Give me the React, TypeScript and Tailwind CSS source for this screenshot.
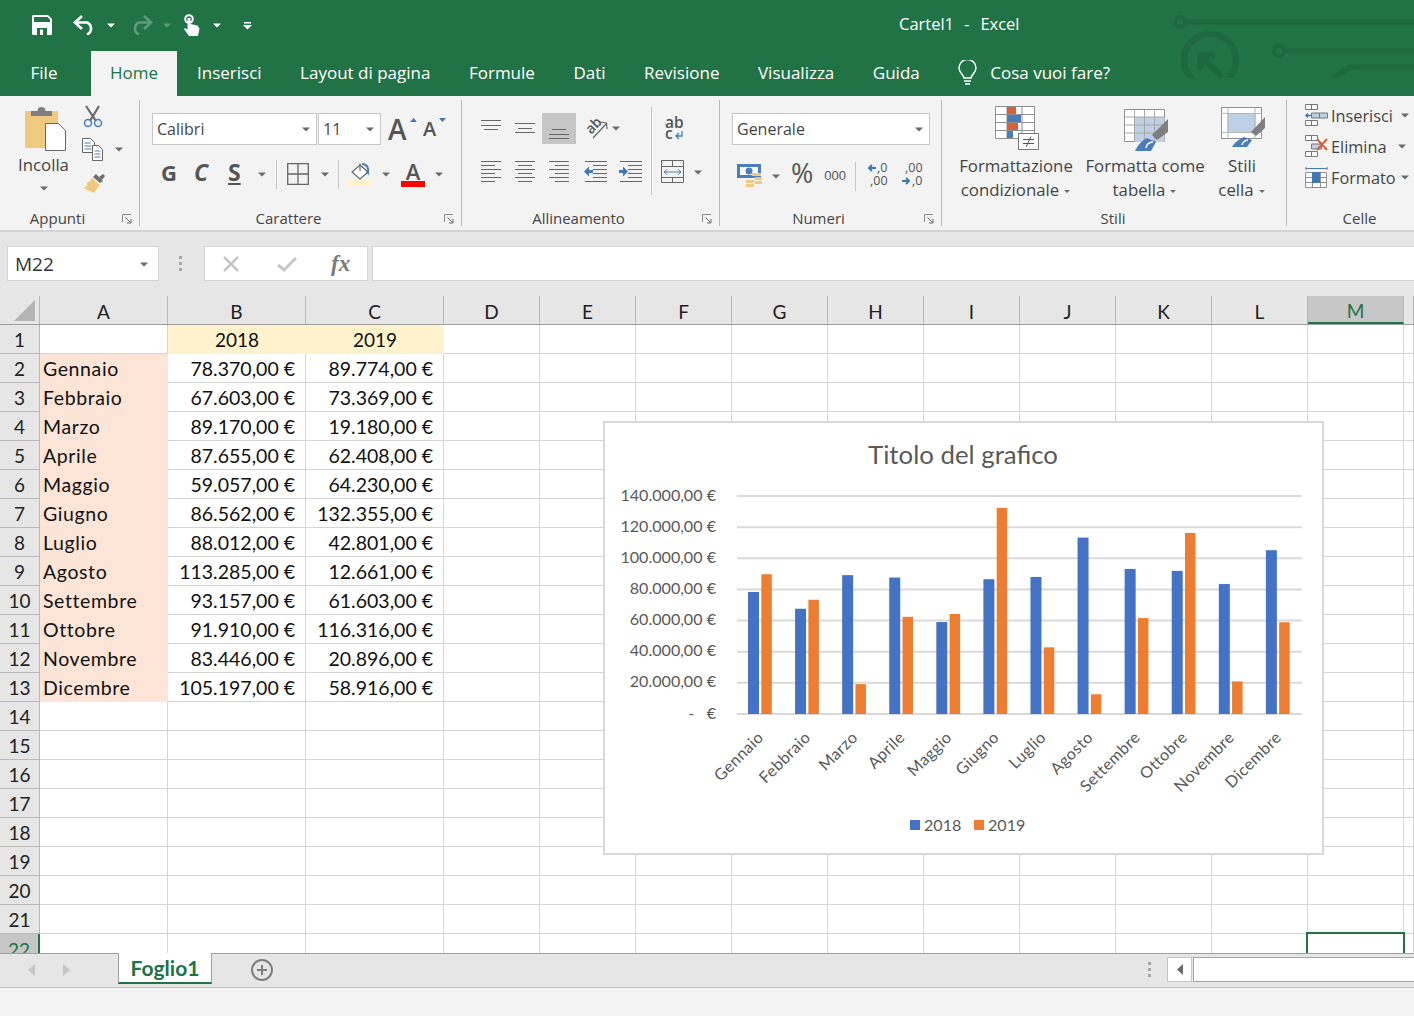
import type { ReactNode } from 'react';

const months = ['Gennaio', 'Febbraio', 'Marzo', 'Aprile', 'Maggio', 'Giugno', 'Luglio', 'Agosto', 'Settembre', 'Ottobre', 'Novembre', 'Dicembre'];
const v2018 = [78370, 67603, 89170, 87655, 59057, 86562, 88012, 113285, 93157, 91910, 83446, 105197];
const v2019 = [89774, 73369, 19180, 62408, 64230, 132355, 42801, 12661, 61603, 116316, 20896, 58916];
const cols = ['A', 'B', 'C', 'D', 'E', 'F', 'G', 'H', 'I', 'J', 'K', 'L', 'M', ''];
const widths = ['w-[128px]', 'w-[138px]', 'w-[138px]', 'w-[96px]', 'w-[96px]', 'w-[96px]', 'w-[96px]', 'w-[96px]', 'w-[96px]', 'w-[96px]', 'w-[96px]', 'w-[96px]', 'w-[96px]', 'w-[10px]'];
const rows = Array.from({ length: 22 }, (_, i) => i + 1);

const fmt = (n: number) => n.toLocaleString('de-DE', { minimumFractionDigits: 2 }) + ' €';

function Caret({ className = '', color = '#6a6a6a' }: { className?: string; color?: string }) {
  return (
    <svg width="8" height="5" viewBox="0 0 8 5" className={className}>
      <path d="M0 .5h8L4 4.5z" fill={color} />
    </svg>
  );
}

function Launcher() {
  return (
    <svg width="10" height="10" viewBox="0 0 10 10" className="absolute right-[7px] bottom-[2px]">
      <path d="M.5 8V.5H9" fill="none" stroke="#8a8a8a" />
      <path d="M3.5 3.5 8.5 8.5M9 5v4H5" fill="none" stroke="#6a6a6a" />
    </svg>
  );
}

function Group({ label, width, launcher = true, children }: { label: string; width: string; launcher?: boolean; children: ReactNode }) {
  return (
    <div className={`${width} relative h-[126px] shrink-0 border-r border-[#b9b9b9]`}>
      {children}
      <div className={`absolute bottom-0 left-0 right-0 h-[16px] text-center text-[15px] leading-[16px] text-[#444] ${launcher ? 'pr-[24px]' : 'pr-[2px]'}`}>{label}</div>
      {launcher && <Launcher />}
    </div>
  );
}

function Lines({ w = 20, h = 24, lines }: { w?: number; h?: number; lines: [number, number, number][] }) {
  return (
    <svg width={w} height={h} viewBox={`0 0 ${w} ${h}`} className="block">
      {lines.map(([x, y, l], i) => (
        <path key={i} d={`M${x} ${y + 0.5}h${l}`} stroke="#666" strokeWidth="1" />
      ))}
    </svg>
  );
}

const ys = [1, 5, 9, 13, 17, 21];

function PasteIcon() {
  return (
    <svg width="44" height="47" viewBox="0 0 44 47">
      <rect x="1" y="6" width="33" height="37" rx="1" fill="#f0c981" />
      <path d="M7 6h6.500a4 4 0 0 1 8 0H28v5H7z" fill="#7f7f7f" />
      <path d="M21.500 18.500h13l7 7v20h-20z" fill="#fff" stroke="#666" />
    </svg>
  );
}

function ScissorsIcon() {
  return (
    <svg width="22" height="23" viewBox="0 0 22 23">
      <path d="M4 1 14 16M17 1 8 16" stroke="#6a6a6a" strokeWidth="2.200" fill="none" />
      <circle cx="6" cy="18" r="3.500" fill="none" stroke="#4a7ebb" strokeWidth="1.500" />
      <circle cx="16" cy="18" r="3.500" fill="none" stroke="#4a7ebb" strokeWidth="1.500" />
    </svg>
  );
}

function CopyIcon() {
  return (
    <svg width="22" height="23" viewBox="0 0 22 23">
      <path d="M.5.500h8l4 4v10H.5z" fill="#fff" stroke="#666" />
      <path d="M2.500 5h6M2.500 8h7M2.500 11h7" stroke="#4a7ebb" />
      <path d="M10.500 7.500h6l4 4v11h-10z" fill="#fff" stroke="#666" />
      <path d="M12.500 13h6M12.500 16h6M12.500 19h6" stroke="#4a7ebb" />
    </svg>
  );
}

function BrushIcon() {
  return (
    <svg width="24" height="21" viewBox="0 0 24 21">
      <path d="M10 5 18 12 12 20 1 15 3 14 6 12 4 11 8 8z" fill="#f0c981" />
      <path d="M11 4 14 1 21 8 18 10z" fill="#6f6f6f" />
      <path d="M17 4l4-3 2 2-3 4z" fill="#6f6f6f" />
    </svg>
  );
}

function BordersIcon() {
  return (
    <svg width="22" height="22" viewBox="0 0 22 22">
      <path d="M.7.700h20.600v20.600H.7zM11 1v20M1 11h20" fill="none" stroke="#666" strokeWidth="1.300" />
    </svg>
  );
}

function FillIcon() {
  return (
    <svg width="26" height="26" viewBox="0 0 26 26">
      <path d="M13 4 21 11 13 18 5 11z" fill="#fff" stroke="#666" strokeWidth="1.200" />
      <path d="M13 10V2.500" stroke="#666" strokeWidth="1.200" />
      <path d="M15 3c5 0 7 4 6 9l-1.500-2" fill="none" stroke="#4a7ebb" strokeWidth="2" />
      <rect x="1" y="19" width="24" height="6" fill="#fff2cc" />
    </svg>
  );
}

function OrientIcon() {
  return (
    <svg width="26" height="26" viewBox="0 0 26 26" className="overflow-visible">
      <text x="2" y="15" transform="rotate(-45 9 11)" fontSize="14" fill="#555" fontFamily="'Open Sans', sans-serif" fontWeight="600">ab</text>
      <path d="M9 22 22 8M16 6l6.500 1 .5 6" fill="none" stroke="#666" strokeWidth="1.200" />
    </svg>
  );
}

function WrapIcon() {
  return (
    <svg width="24" height="30" viewBox="0 0 24 30" className="overflow-visible">
      <text x="0" y="15" fontSize="15.500" fill="#555" fontFamily="'Open Sans', sans-serif" fontWeight="600">ab</text>
      <text x="0" y="26" fontSize="15.500" fill="#555" fontFamily="'Open Sans', sans-serif" fontWeight="600">c</text>
      <path d="M17 18v5h-6M14 20l-3 3 3 3" fill="none" stroke="#4a7ebb" strokeWidth="1.300" />
    </svg>
  );
}

function MergeIcon() {
  return (
    <svg width="24" height="24" viewBox="0 0 24 24">
      <path d="M.5.500h22v22H.5zM1 6.500h21M1 17.500h21M11.500 1v5M11.500 18v5" fill="none" stroke="#666" />
      <path d="M3 12h17M6 9.500 3 12l3 2.500M17 9.500l3 2.500-3 2.500" fill="none" stroke="#4a7ebb" />
    </svg>
  );
}

function IndentIcon({ right = false }: { right?: boolean }) {
  return (
    <svg width="23" height="22" viewBox="0 0 23 22">
      <path d="M1 .5h22M9 4.500h14M9 8.500h14M9 12.500h14M9 16.500h14M1 20.500h22" stroke="#666" />
      {right ? <path d="M0 9h4V5.500l5 5-5 5V12H0z" fill="#3f78b5" /> : <path d="M9 9H5V5.500l-5 5 5 5V12h4z" fill="#3f78b5" />}
    </svg>
  );
}

function CurrencyIcon() {
  return (
    <svg width="25" height="24" viewBox="0 0 25 24">
      <path d="M0 0h24v14H0z" fill="#4a7ebb" />
      <path d="M3 3h18v8H3z" fill="#fff" />
      <circle cx="12" cy="7" r="3.500" fill="#4a7ebb" />
      <path d="M15 9h9v3h-9zM18 13h7v3h-7z" fill="#f0c981" />
      <path d="M9 16h8v3H9zM9 20h8v3H9zM18 17h7v3h-7z" fill="#f0c981" />
    </svg>
  );
}

function DecimalIcon({ more }: { more: boolean }) {
  const font = "'Open Sans', sans-serif";
  return (
    <svg width="24" height="26" viewBox="0 0 24 26" className="overflow-visible">
      {more ? (
        <>
          <path d="M9 5H2M5 2 2 5l3 3" fill="none" stroke="#3f78b5" strokeWidth="2" />
          <text x="10" y="9" fontSize="12.500" fill="#555" fontFamily={font}>,0</text>
          <text x="3" y="22" fontSize="12.500" fill="#555" fontFamily={font}>,00</text>
        </>
      ) : (
        <>
          <text x="4" y="9" fontSize="12.500" fill="#555" fontFamily={font}>,00</text>
          <path d="M1 18h7M5 15l3 3-3 3" fill="none" stroke="#3f78b5" strokeWidth="2" />
          <text x="11" y="22" fontSize="12.500" fill="#555" fontFamily={font}>,0</text>
        </>
      )}
    </svg>
  );
}

function CondFormatIcon() {
  return (
    <svg width="46" height="46" viewBox="0 0 46 46">
      <path d="M.5 1.500h39v32H.5zM.5 9.500h39M.5 17.500h39M.5 25.500h39M12 2v32M27 2v32" fill="#fff" stroke="#8f8f8f" />
      <path d="M12 2h9v7h-9z" fill="#d9603b" />
      <path d="M12 10h14v7H12z" fill="#4a7ebb" />
      <path d="M12 18h11v7H12z" fill="#d9603b" />
      <path d="M12 26h6v7h-6z" fill="#4a7ebb" />
      <path d="M23.500 28.500h20v16h-20z" fill="#fff" stroke="#777" />
      <path d="M28 34.500h11M28 38.500h11M36 31.500 31 42" stroke="#555" />
    </svg>
  );
}

function FormatTableIcon() {
  return (
    <svg width="46" height="46" viewBox="0 0 46 46">
      <path d="M.5 4.500h40v32H.5z" fill="#fff" stroke="#8f8f8f" />
      <path d="M10.500 12h30v25h-30z" fill="#bdd0e6" />
      <path d="M.5 12h40M.5 20h40M.5 28h40M10.500 5v32M20.500 5v32M30.500 5v32" fill="none" stroke="#a9a9a9" />
      <path d="M44 14V27L33 35 28 30z" fill="#7f7f7f" />
      <path d="M11 46C14 40 18 35 23 33L32 37 27 46z" fill="#4a7ebb" />
      <path d="M22 43c0-3 3-6 7-6" fill="none" stroke="#fff" strokeWidth="1.500" />
    </svg>
  );
}

function CellStyleIcon() {
  return (
    <svg width="46" height="46" viewBox="0 0 46 46">
      <path d="M.5 2.500h40v31H.5z" fill="#fff" stroke="#8f8f8f" />
      <path d="M7 8.500h27v19H7z" fill="#bdd0e6" stroke="#b5c2d0" />
      <path d="M7 2.500v31M34 2.500v31M.5 8.500h40M.5 27.500h40" fill="none" stroke="#b5b5b5" />
      <path d="M44 12V23L35 31 30 27z" fill="#7f7f7f" />
      <path d="M11 42C14 37 18 34 23 32L31 35 26 42z" fill="#4a7ebb" />
      <path d="M21 40c0-2 3-5 6-5" fill="none" stroke="#fff" strokeWidth="1.500" />
    </svg>
  );
}

function InsertIcon() {
  return (
    <svg width="23" height="23" viewBox="0 0 23 23">
      <path d="M.5.500h12v5H.5zM6.500 1v4M.5 16.500h12v5H.5zM6.500 16v6" fill="#fff" stroke="#777" />
      <path d="M6.500 9h16v5h-16zM14.500 9v5" fill="#bdd0e6" stroke="#777" />
      <path d="M6 11.500H1M3 9.500l-2 2 2 2" fill="none" stroke="#3f78b5" strokeWidth="1.500" />
    </svg>
  );
}

function DeleteIcon() {
  return (
    <svg width="24" height="23" viewBox="0 0 24 23">
      <path d="M.5.500h12v5H.5zM.5 16.500h12v5H.5zM6.500 16v6M6.500 1v4" fill="#fff" stroke="#777" />
      <path d="M6.500 9h10v5h-10z" fill="#bdd0e6" stroke="#777" />
      <path d="M12 4l10 11M22 4 12 15" stroke="#d9603b" strokeWidth="2" />
    </svg>
  );
}

function FormatIcon() {
  return (
    <svg width="23" height="23" viewBox="0 0 23 23">
      <path d="M1 2.500h7M15 2.500h7M1 1v3M22 1v3" stroke="#777" />
      <path d="M3 2.500h17" stroke="#3f78b5" />
      <path d="M.5 6.500h21v15h-21zM7.500 7v14M15.500 7v14M1 11.500h20M1 16.500h20" fill="#fff" stroke="#8f8f8f" />
      <path d="M7 6h8v11H7z" fill="#3f78b5" />
    </svg>
  );
}

function CircuitBg() {
  return (
    <svg width="240" height="78" viewBox="0 0 240 78" className="absolute right-0 top-0">
      <g fill="none" stroke="#1e673f" strokeWidth="5">
        <circle cx="6" cy="22" r="5" strokeWidth="4" />
        <path d="M12 22h228" />
        <circle cx="105" cy="51" r="5" strokeWidth="4" />
        <path d="M111 51h129" />
        <path d="M159 78l14-9q3-2 8-2h59" />
        <circle cx="36" cy="60" r="26" strokeWidth="6" />
        <path d="M27 56 48 77" strokeWidth="6" />
        <path d="M26.500 70V55.500H41" strokeWidth="6" />
      </g>
    </svg>
  );
}

function TitleBar() {
  return (
    <div className="relative flex h-[51px] items-start bg-[#217346] text-white">
      <CircuitBg />
      <div className="flex items-center pl-[32px] pt-[14px]">
        <svg width="20" height="20" viewBox="0 0 20 20">
          <path d="M0 1.500A1.500 1.500 0 0 1 1.500 0H16l4 4v14.500a1.500 1.500 0 0 1-1.500 1.500h-17A1.500 1.500 0 0 1 0 18.500z" fill="#fff" />
          <path d="M2 2h13.500L18 4.500V7H2z" fill="#217346" />
          <path d="M5 13h10v7H5z" fill="#217346" />
          <path d="M8 14.500h3V20H8z" fill="#fff" />
        </svg>
        <svg width="23" height="20" viewBox="0 0 23 20" className="ml-[21px]">
          <path d="M9 1 2 7.500 9 14M3 7.500h11a6.500 6.500 0 0 1 0 12" fill="none" stroke="#fff" strokeWidth="2.600" />
        </svg>
        <Caret color="#fff" className="ml-[11px]" />
        <svg width="23" height="20" viewBox="0 0 23 20" className="ml-[15px]">
          <path d="M14 1l7 6.500L14 14M20 7.500H9a6.500 6.500 0 0 0 0 12" fill="none" stroke="#5f9c7b" strokeWidth="2.600" />
        </svg>
        <Caret color="#5f9c7b" className="ml-[10px]" />
        <svg width="17" height="22" viewBox="0 0 17 22" className="ml-[12px]">
          <circle cx="6" cy="5" r="3.800" fill="none" stroke="#fff" strokeWidth="2" />
          <path d="M4.500 4h3v6l7 1.500 2 3L15 22H6L1 15l1-1 2.500 1.500z" fill="#fff" />
        </svg>
        <Caret color="#fff" className="ml-[13px]" />
        <svg width="9" height="9" viewBox="0 0 9 9" className="ml-[22px]">
          <path d="M1 1h7v1.500H1zM0 4h9L4.500 8.500z" fill="#fff" />
        </svg>
      </div>
      <div className="absolute left-[899px] top-[13px] flex text-[16.500px] leading-[22px]">
        <span>Cartel1</span>
        <span className="ml-[10px]">-</span>
        <span className="ml-[11px]">Excel</span>
      </div>
    </div>
  );
}

function TabBar() {
  const tabs = ['Inserisci', 'Layout di pagina', 'Formule', 'Dati', 'Revisione', 'Visualizza', 'Guida'];
  return (
    <div className="flex h-[45px] items-stretch bg-[#217346] text-[17px] text-white">
      <div className="flex w-[91px] items-center justify-center pb-[2px] pr-[3px]">File</div>
      <div className="flex w-[86px] items-center justify-center bg-[#f3f3f3] pb-[2px] text-[#217346]">Home</div>
      <div className="flex items-center gap-[38.500px] pb-[2px] pl-[20px]">
        {tabs.map((t) => (
          <span key={t}>{t}</span>
        ))}
        <span className="flex items-center gap-[13px]">
          <svg width="19" height="26" viewBox="0 0 19 26">
            <path d="M6 18c0-3-5-5-5-10a8.500 8.500 0 0 1 17 0c0 5-5 7-5 10z" fill="none" stroke="#fff" strokeWidth="1.500" />
            <path d="M6 21h7M7 24h5" stroke="#fff" strokeWidth="1.500" />
          </svg>
          Cosa vuoi fare?
        </span>
      </div>
    </div>
  );
}

function Ribbon() {
  const big = 'text-[16.800px] leading-[24px] text-[#444]';
  const combo = 'flex h-[32px] items-center justify-between border border-[#c6c6c6] bg-white pl-[4px] pr-[6px] text-[16px] text-[#444]';
  return (
    <div className="flex h-[136px] border-b-2 border-[#d4d4d4] bg-[#f3f3f3] pt-[4px] text-[#444]">
      <Group label="Appunti" width="w-[140px]">
        <div className="flex pl-[18px] pt-[5px]">
          <div className="flex w-[51px] flex-col items-center">
            <div className="pl-[4px]"><PasteIcon /></div>
            <div className={`${big} mt-[1px]`}>Incolla</div>
            <Caret className="mt-[9px]" />
          </div>
          <div className="ml-[13px] flex flex-col">
            <ScissorsIcon />
            <div className="mt-[10px] flex items-center">
              <CopyIcon />
              <Caret className="ml-[11px]" />
            </div>
            <div className="mt-[12px]"><BrushIcon /></div>
          </div>
        </div>
      </Group>

      <Group label="Carattere" width="w-[322px]">
        <div className="flex items-center pl-[12px] pt-[13px]">
          <div className={`${combo} w-[165px]`}>Calibri<Caret /></div>
          <div className={`${combo} ml-[1px] w-[63px]`}>11<Caret /></div>
          <div className="relative ml-[7px] w-[26px] text-[28px] leading-[32px] font-semibold text-[#555]">
            A
            <svg width="7" height="4" viewBox="0 0 7 4" className="absolute right-[-3px] top-[5px]"><path d="M0 4h7L3.500 0z" fill="#3f78b5" /></svg>
          </div>
          <div className="relative ml-[9px] w-[22px] text-[20px] leading-[32px] font-semibold text-[#555]">
            A
            <svg width="7" height="4" viewBox="0 0 7 4" className="absolute right-[-1px] top-[5px]"><path d="M0 0h7L3.500 4z" fill="#3f78b5" /></svg>
          </div>
        </div>
        <div className="mt-[13px] flex items-center pl-[21px]">
          <span className="mb-[4px] w-[33px] text-[22px] leading-[28px] font-bold text-[#555]">G</span>
          <span className="mb-[4px] w-[34px] text-[23px] leading-[28px] font-bold italic text-[#555]">C</span>
          <span className="mb-[4px] w-[30px] text-[23px] leading-[28px] font-bold text-[#555] underline">S</span>
          <Caret />
          <div className="ml-[10px] h-[29px] w-px bg-[#c6c6c6]" />
          <div className="ml-[10px]"><BordersIcon /></div>
          <Caret className="ml-[12px]" />
          <div className="ml-[9px] h-[29px] w-px bg-[#c6c6c6]" />
          <div className="ml-[8px]"><FillIcon /></div>
          <Caret className="ml-[9px]" />
          <div className="ml-[11px] flex w-[24px] flex-col items-center">
            <span className="text-[22px] leading-[19px] font-semibold text-[#555]">A</span>
            <div className="h-[6px] w-[24px] bg-[#f00]" />
          </div>
          <Caret className="ml-[10px]" />
        </div>
      </Group>

      <Group label="Allineamento" width="w-[258px]">
        <div className="flex">
          <div className="pl-[19px] pt-[13px]">
            <div className="flex h-[31px] items-center">
              <div className="-mt-[6px]"><Lines h={11} lines={[[0, 0, 20], [0, 5, 20], [3, 9, 14]]} /></div>
              <div className="ml-[14px]"><Lines h={11} lines={[[0, 0, 20], [3, 5, 14], [0, 9, 20]]} /></div>
              <div className="ml-[7px] flex h-[31px] w-[34px] items-end justify-center bg-[#c6c6c6] pb-[4px]">
                <Lines h={11} lines={[[3, 0, 14], [0, 5, 20], [0, 9, 20]]} />
              </div>
              <div className="ml-[8px]"><OrientIcon /></div>
              <Caret className="ml-[2px]" />
            </div>
            <div className="mt-[16px] flex items-center">
              <Lines lines={ys.map((y, i) => [0, y, i % 2 ? 14 : 20])} />
              <div className="ml-[14px]"><Lines lines={ys.map((y, i) => [i % 2 ? 3 : 0, y, i % 2 ? 14 : 20])} /></div>
              <div className="ml-[14px]"><Lines lines={ys.map((y, i) => [i % 2 ? 6 : 0, y, i % 2 ? 14 : 20])} /></div>
              <div className="ml-[15px]"><IndentIcon /></div>
              <div className="ml-[12px]"><IndentIcon right /></div>
            </div>
          </div>
          <div className="ml-[9px] mt-[7px] h-[88px] w-px bg-[#c6c6c6]" />
          <div className="ml-[9px] flex flex-col pt-[13px]">
            <div className="ml-[4px] h-[30px]"><WrapIcon /></div>
            <div className="mt-[17px] flex items-center">
              <MergeIcon />
              <Caret className="ml-[9px]" />
            </div>
          </div>
        </div>
      </Group>

      <Group label="Numeri" width="w-[222px]">
        <div className="pl-[12px] pt-[13px]">
          <div className={`${combo} w-[198px]`}>Generale<Caret /></div>
          <div className="mt-[15px] flex items-center">
            <div className="ml-[5px]"><CurrencyIcon /></div>
            <Caret className="ml-[10px]" />
            <span className="mb-[6px] ml-[11px] text-[27px] leading-[26px] text-[#555]">%</span>
            <span className="ml-[11px] font-['Liberation_Sans',sans-serif] text-[13px] leading-[26px] text-[#555]">000</span>
            <div className="ml-[9px] h-[29px] w-px bg-[#c6c6c6]" />
            <div className="ml-[11px]"><DecimalIcon more /></div>
            <div className="ml-[10px]"><DecimalIcon more={false} /></div>
          </div>
        </div>
      </Group>

      <Group label="Stili" width="w-[345px]" launcher={false}>
        <div className="flex pt-[5px]">
          <div className="flex w-[136px] shrink-0 flex-col items-center pl-[12px]">
            <div className="pl-[4px]"><CondFormatIcon /></div>
            <div className={`${big} mt-[3px] whitespace-nowrap`}>Formattazione</div>
            <div className={`${big} flex items-center gap-[4px] whitespace-nowrap`}>condizionale<Caret className="mt-[2px] scale-75" /></div>
          </div>
          <div className="flex w-[134px] shrink-0 flex-col items-center">
            <div className="pl-[4px]"><FormatTableIcon /></div>
            <div className={`${big} mt-[3px] whitespace-nowrap`}>Formatta come</div>
            <div className={`${big} flex items-center gap-[4px] whitespace-nowrap`}>tabella<Caret className="mt-[2px] scale-75" /></div>
          </div>
          <div className="flex w-[60px] shrink-0 flex-col items-center">
            <div className="pl-[4px]"><CellStyleIcon /></div>
            <div className={`${big} mt-[3px]`}>Stili</div>
            <div className={`${big} flex items-center gap-[4px] whitespace-nowrap`}>cella<Caret className="mt-[2px] scale-75" /></div>
          </div>
        </div>
      </Group>

      <div className="relative h-[126px] flex-1 overflow-hidden">
        <div className="flex flex-col gap-[8px] pl-[18px] pt-[4px]">
          {[
            { t: 'Inserisci', i: <InsertIcon />, c: 'ml-[8px]' },
            { t: 'Elimina', i: <DeleteIcon />, c: 'ml-[12px]' },
            { t: 'Formato', i: <FormatIcon />, c: 'ml-[5px]' },
          ].map((r) => (
            <div key={r.t} className="flex h-[23px] items-center whitespace-nowrap">
              {r.i}
              <span className={`text-[16.300px] leading-[24px] text-[#444] ${r.t === 'Elimina' ? 'ml-[2px]' : 'ml-[3px]'}`}>{r.t}</span>
              <Caret className={r.c} />
            </div>
          ))}
        </div>
        <div className="absolute bottom-0 left-0 right-0 h-[16px] pl-[18px] text-center text-[15px] leading-[16px] text-[#444]">Celle</div>
      </div>
    </div>
  );
}

function FormulaBar() {
  return (
    <div className="flex h-[64px] bg-[#e6e6e6] pl-[7px] pt-[14px]">
      <div className="flex h-[35px] w-[152px] items-center justify-between border border-[#d4d4d4] bg-white pl-[7px] pr-[10px] pt-[1px] text-[19px] text-[#333]">
        M22
        <Caret />
      </div>
      <div className="ml-[19px] flex h-[35px] w-[4px] flex-col items-center justify-center gap-[3px]">
        <i className="h-[3px] w-[3px] bg-[#a6a6a6]" />
        <i className="h-[3px] w-[3px] bg-[#a6a6a6]" />
        <i className="h-[3px] w-[3px] bg-[#a6a6a6]" />
      </div>
      <div className="ml-[22px] flex h-[35px] w-[164px] items-center border border-[#d4d4d4] bg-white pl-[17px]">
        <svg width="18" height="18" viewBox="0 0 18 18"><path d="M2 2 16 16M16 2 2 16" stroke="#c6c6c6" strokeWidth="2.500" /></svg>
        <svg width="20" height="16" viewBox="0 0 20 16" className="ml-[37px]"><path d="M1 9 7 14 19 2" fill="none" stroke="#c6c6c6" strokeWidth="3" /></svg>
        <span className="ml-[34px] font-['Liberation_Serif',serif] text-[23px] italic font-bold leading-[30px] text-[#7a7a7a]">fx</span>
      </div>
      <div className="ml-[4px] h-[35px] flex-1 border border-[#d4d4d4] border-r-0 bg-white" />
    </div>
  );
}

function Cell({ r, c }: { r: number; c: number }) {
  const base = `${widths[c]} relative flex h-full shrink-0 items-center leading-none`;
  if (c === 0) {
    if (r === 1) return <div className={`${base} border-b border-r border-[#d4d4d4]`} />;
    if (r <= 13) return <div className={`${base} bg-[#fce4d6] pl-[3px] text-[19.500px] tracking-[0.6px] text-[#111]`}>{months[r - 2]}</div>;
  }
  if ((c === 1 || c === 2) && r === 1) {
    return <div className={`${base} justify-center bg-[#fff2cc] text-[#111]`}>{c === 1 ? '2018' : '2019'}</div>;
  }
  if ((c === 1 || c === 2) && r <= 13) {
    const v = (c === 1 ? v2018 : v2019)[r - 2];
    return <div className={`${base} justify-end border-b border-r border-[#d4d4d4] pr-[10px] pt-[1px] text-[19.500px] text-[#111]`}>{fmt(v)}</div>;
  }
  return (
    <div className={`${base} border-b border-r border-[#d4d4d4]`}>
      {r === 22 && c === 12 && <div className="absolute -left-[2px] -top-[2px] h-[23px] w-[99px] border-2 border-b-0 border-[#217346]" />}
    </div>
  );
}

function Sheet() {
  return (
    <div className="relative h-[657px] overflow-hidden bg-white font-['Lato',sans-serif] text-[19px]">
      <div className="flex h-[29px] border-b border-[#9f9f9f] bg-[#e6e6e6] text-[#222]">
        <div className="relative w-[40px] shrink-0 border-r border-[#b9b9b9]">
          <svg width="22" height="21" viewBox="0 0 22 21" className="absolute left-[14px] top-[4px]"><path d="M21 0v21H0z" fill="#b4b4b4" /></svg>
        </div>
        {cols.map((c, i) => (
          <div
            key={i}
            className={`${widths[i]} flex shrink-0 items-center justify-center border-r pt-[5px] ${c === 'M' ? 'border-b-2 border-b-[#217346] border-r-[#b9b9b9] bg-[#c6c6c6] text-[#217346]' : 'border-[#b9b9b9]'}`}
          >
            {c}
          </div>
        ))}
      </div>
      {rows.map((r) => (
        <div key={r} className="flex h-[29px]">
          <div className={`flex w-[40px] shrink-0 items-center justify-center border-r pt-[3px] ${r === 22 ? 'border-r-2 border-[#217346] bg-[#c6c6c6] text-[#217346]' : 'border-b border-[#b9b9b9] bg-[#e6e6e6] text-[#222]'}`}>{r}</div>
          {cols.map((_, c) => (
            <Cell key={c} r={r} c={c} />
          ))}
        </div>
      ))}
      <Chart />
    </div>
  );
}

function Chart() {
  const y0 = 714;
  const scale = 218 / 140000;
  const ticks = [0, 20000, 40000, 60000, 80000, 100000, 120000, 140000];
  return (
    <div className="absolute left-[603px] top-[125px] h-[434px] w-[721px] border-2 border-[#d9d9d9] bg-white">
      <svg width="717" height="430" viewBox="605 423 717 430" fontFamily="Lato, sans-serif" fill="#595959">
        <text x="963" y="464" fontSize="25.800" textAnchor="middle">Titolo del grafico</text>
        {ticks.map((t) => {
          const y = y0 - t * scale;
          return (
            <g key={t}>
              <path d={`M737 ${y}H1302`} stroke="#d9d9d9" strokeWidth="2" />
              <text x="716" y={y + 4.500} fontSize="16.100" textAnchor="end" xmlSpace="preserve">
                {t === 0 ? '-   €' : fmt(t)}
              </text>
            </g>
          );
        })}
        {months.map((m, i) => {
          const x = 748 + i * 47.08;
          const a = v2018[i] * scale;
          const b = v2019[i] * scale;
          return (
            <g key={m}>
              <rect x={x} y={y0 - a} width="11" height={a} fill="#4472c4" />
              <rect x={x + 13.300} y={y0 - b} width="10.500" height={b} fill="#ed7d31" />
              <text transform={`translate(${x + 16.500} 738.500) rotate(-45)`} fontSize="16.100" letterSpacing="0.4" textAnchor="end">{m}</text>
            </g>
          );
        })}
        <rect x="910" y="820" width="10" height="10" fill="#4472c4" />
        <text x="924" y="830.500" fontSize="16.100">2018</text>
        <rect x="974" y="820" width="10" height="10" fill="#ed7d31" />
        <text x="988" y="830.500" fontSize="16.100">2019</text>
      </svg>
    </div>
  );
}

function SheetBar() {
  return (
    <div className="flex h-[35px] border-y border-t-[#9f9f9f] border-b-[#c6c6c6] bg-[#e6e6e6]">
      <svg width="8" height="12" viewBox="0 0 8 12" className="ml-[28px] mt-[10px]"><path d="M7 0v12L0 6z" fill="#c6c6c6" /></svg>
      <svg width="8" height="12" viewBox="0 0 8 12" className="ml-[26px] mt-[10px]"><path d="M1 0v12l7-6z" fill="#c6c6c6" /></svg>
      <div className="-mt-[1px] ml-[48px] flex h-[31px] w-[94px] items-center justify-center border-x border-b-2 border-x-[#9f9f9f] border-b-[#217346] bg-white font-['Lato',sans-serif] text-[21px] font-bold text-[#217346]">
        Foglio1
      </div>
      <div className="ml-[39px] mt-[5px] flex h-[22px] w-[22px] items-center justify-center rounded-full border-2 border-[#7f7f7f]">
        <svg width="12" height="12" viewBox="0 0 12 12"><path d="M6 1v10M1 6h10" stroke="#7f7f7f" strokeWidth="2" /></svg>
      </div>
      <div className="ml-[875px] mt-[8px] flex flex-col gap-[3px]">
        <i className="h-[3px] w-[3px] bg-[#a6a6a6]" />
        <i className="h-[3px] w-[3px] bg-[#a6a6a6]" />
        <i className="h-[3px] w-[3px] bg-[#a6a6a6]" />
      </div>
      <div className="ml-[16px] mt-[3px] flex h-[25px] w-[25px] items-center justify-center border border-[#c6c6c6] bg-white">
        <svg width="6" height="11" viewBox="0 0 6 11"><path d="M6 0v11L0 5.500z" fill="#6a6a6a" /></svg>
      </div>
      <div className="ml-px mt-[3px] h-[25px] flex-1 border border-r-0 border-[#a6a6a6] bg-white" />
    </div>
  );
}

export default function App() {
  return (
    <div className="flex h-[1016px] w-[1414px] flex-col overflow-hidden bg-[#f3f3f3] font-['Open_Sans',sans-serif]">
      <TitleBar />
      <TabBar />
      <Ribbon />
      <FormulaBar />
      <Sheet />
      <SheetBar />
      <div className="h-[28px] bg-[#f3f3f3]" />
    </div>
  );
}
